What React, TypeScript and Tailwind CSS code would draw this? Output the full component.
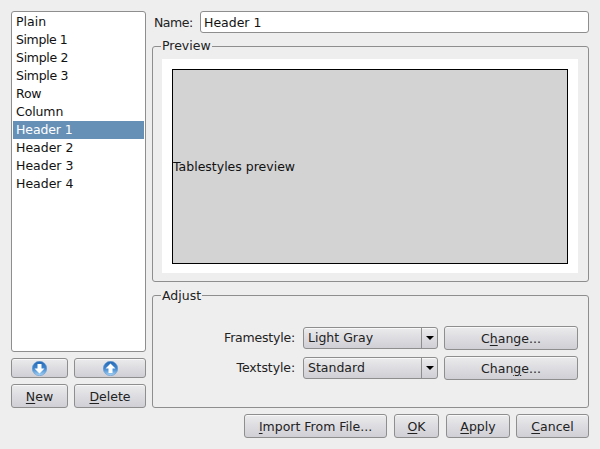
import React from "react";

const font = "font-['DejaVu_Sans',sans-serif] text-[12.5px] leading-[15px] text-[#111]";
const btn =
  "flex items-center justify-center rounded-[3px] border border-[#8e8e8e] bg-gradient-to-b from-[#ebebed] to-[#cfcfd5] text-[#222] shadow-[inset_0_1px_0_#f8f8f8]";

function U({ children }: { children: string }) {
  return <span className="underline underline-offset-2">{children}</span>;
}

function CircleArrow({ up }: { up?: boolean }) {
  const id = up ? "gu" : "gd";
  return (
    <svg width="15" height="15" viewBox="0 0 15 15">
      <defs>
        <linearGradient id={id} x1="0" y1="0" x2="0" y2="1">
          <stop offset="0" stopColor="#2468b4" />
          <stop offset="0.5" stopColor="#3f86cf" />
          <stop offset="1" stopColor="#a9d5f6" />
        </linearGradient>
      </defs>
      <circle cx="7.5" cy="7.5" r="7.2" fill={`url(#${id})`} stroke="#5c97d2" strokeWidth="0.6" />
      <path
        d={up ? "M7.5 2.5 L12.5 7.5 H9.5 V12 H5.5 V7.5 H2.5 Z" : "M7.5 12.5 L12.5 7.5 H9.5 V3 H5.5 V7.5 H2.5 Z"}
        fill="#fff"
      />
    </svg>
  );
}

function Combo({ value }: { value: string }) {
  return (
    <div className="flex h-[22px] w-[135px] rounded-[3px] border border-[#8e8e8e] bg-gradient-to-b from-[#ebebed] to-[#cfcfd5] shadow-[inset_0_1px_0_#f8f8f8]">
      <div className="flex flex-1 items-center pb-[2px] pl-[4px] text-[#222]">{value}</div>
      <div className="flex w-[16px] items-center justify-center border-l border-[#8e8e8e]">
        <div className="h-0 w-0 border-x-[4px] border-t-[4px] border-x-transparent border-t-black" />
      </div>
    </div>
  );
}

const items: [string, string][] = [
  ["Plain", ""],
  ["Simple 1", "tracking-[-0.4px]"],
  ["Simple 2", "tracking-[-0.3px]"],
  ["Simple 3", "tracking-[-0.3px]"],
  ["Row", "tracking-[-0.2px]"],
  ["Column", "tracking-[-0.1px]"],
  ["Header 1", "tracking-[-0.1px]"],
  ["Header 2", ""],
  ["Header 3", ""],
  ["Header 4", ""],
];

export default function App() {
  return (
    <div className={`flex h-[449px] w-[600px] flex-col gap-[6px] overflow-hidden bg-[#eeeeee] pt-[11px] pr-[11px] pl-[11px] ${font}`}>
      <div className="flex h-[397px] gap-[6px]">
        <div className="flex w-[135px] flex-col">
          <div className="h-[341px] rounded-[3px] border border-[#8e8e8e] bg-white p-[1px]">
            {items.map(([t, tr]) => (
              <div
                key={t}
                className={`h-[18px] pl-[3px] leading-[18px] ${tr} ${t === "Header 1" ? "bg-[#6690b6] text-white" : "text-[#111]"}`}
              >
                {t}
              </div>
            ))}
          </div>
          <div className="mt-[6px] flex gap-[6px]">
            <div className={`${btn} h-[20px] w-[57px]`}><CircleArrow /></div>
            <div className={`${btn} h-[20px] w-[72px]`}><CircleArrow up /></div>
          </div>
          <div className="mt-[6px] flex gap-[6px]">
            <div className={`${btn} h-[24px] w-[57px]`}><U>N</U>ew</div>
            <div className={`${btn} h-[24px] w-[72px]`}><U>D</U>elete</div>
          </div>
        </div>
        <div className="flex flex-1 flex-col">
          <div className="flex h-[22px] items-center">
            <div className="w-[48px] pl-[2px] tracking-[-0.5px] text-[#222]">Name:</div>
            <div className="flex h-[22px] flex-1 items-center rounded-[3px] border border-[#8e8e8e] bg-white pl-[3px]">Header 1</div>
          </div>
          <div className="relative mt-[13px] flex h-[236px] rounded-[3px] border border-[#8e8e8e] pt-[12px] pr-[10px] pb-[8px] pl-[9px]">
            <span className="absolute top-[-9px] left-[8px] bg-[#eeeeee] px-[1px] text-[#222]">Preview</span>
            <div className="flex flex-1 bg-white pt-[10px] pr-[10px] pb-[9px] pl-[10px]">
              <div className="flex flex-1 items-center border border-black bg-[#d3d3d3]">Tablestyles preview</div>
            </div>
          </div>
          <div className="relative mt-[13px] flex h-[113px] flex-col items-end justify-center gap-[6px] rounded-[3px] border border-[#8e8e8e] pt-[3px] pr-[10px]">
            <span className="absolute top-[-8px] left-[8px] bg-[#eeeeee] px-[1px] text-[#222]">Adjust</span>
            <div className="flex items-center gap-[6px]">
              <span className="mr-[2px] pb-[2px] tracking-[-0.2px] text-[#222]">Framestyle:</span>
              <Combo value="Light Gray" />
              <div className={`${btn} h-[24px] w-[134px]`}>C<U>h</U>ange...</div>
            </div>
            <div className="flex items-center gap-[6px]">
              <span className="mr-[2px] pb-[2px] tracking-[-0.1px] text-[#222]">Textstyle:</span>
              <Combo value="Standard" />
              <div className={`${btn} h-[24px] w-[134px]`}>Chan<U>g</U>e...</div>
            </div>
          </div>
        </div>
      </div>
      <div className="flex justify-end">
        <div className={`${btn} h-[24px] w-[143px]`}><U>I</U>mport From File...</div>
        <div className={`${btn} ml-[7px] h-[24px] w-[45px] border-[#6a6a6a]`}><U>O</U>K</div>
        <div className={`${btn} ml-[7px] h-[24px] w-[64px]`}><U>A</U>pply</div>
        <div className={`${btn} ml-[6px] h-[24px] w-[73px]`}><U>C</U>ancel</div>
      </div>
    </div>
  );
}
